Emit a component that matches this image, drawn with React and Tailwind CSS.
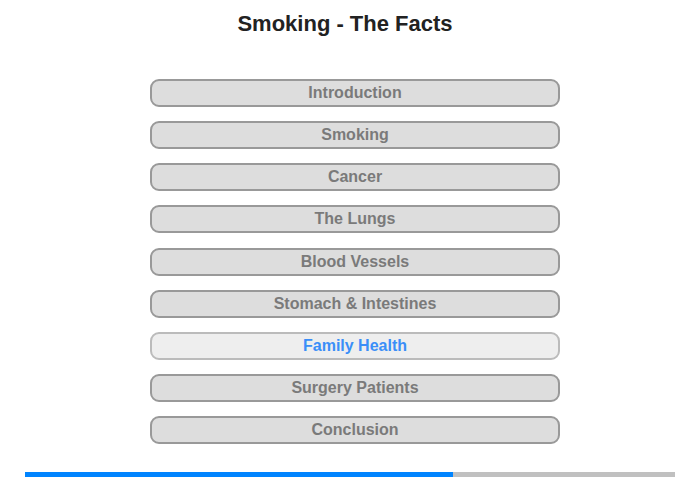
import React from 'react';

const items = [
  'Introduction',
  'Smoking',
  'Cancer',
  'The Lungs',
  'Blood Vessels',
  'Stomach & Intestines',
  'Family Health',
  'Surgery Patients',
  'Conclusion',
];

function App() {
  const active = 'Family Health';

  return (
    <div className="w-[700px] h-[480px] bg-white font-['Liberation_Sans',Arial,sans-serif]">
      <h1 className="pt-[11px] pr-[10px] text-center text-[22px] leading-[26px] font-bold text-[#222]">
        Smoking - The Facts
      </h1>

      {/* Menu */}
      <div className="mt-[42px] ml-[150px] w-[410px] flex flex-col gap-[14.125px]">
        {items.map((item) => (
          <button
            key={item}
            className={
              item === active
                ? 'h-[28px] rounded-[9px] border-2 border-[#bbb] bg-[#eee] text-[16px] font-bold text-[#3a8ef8]'
                : 'h-[28px] rounded-[9px] border-2 border-[#999] bg-[#ddd] text-[16px] font-bold text-[#7a7a7a]'
            }
          >
            {item}
          </button>
        ))}
      </div>

      {/* Progress */}
      <div className="mt-[28px] mx-[25px] h-[5px] flex bg-[#c0c0c0]">
        <div className="h-full bg-[#0084ff]" style={{ width: `${(428 / 650) * 100}%` }} />
      </div>
    </div>
  );
}

export default App;
